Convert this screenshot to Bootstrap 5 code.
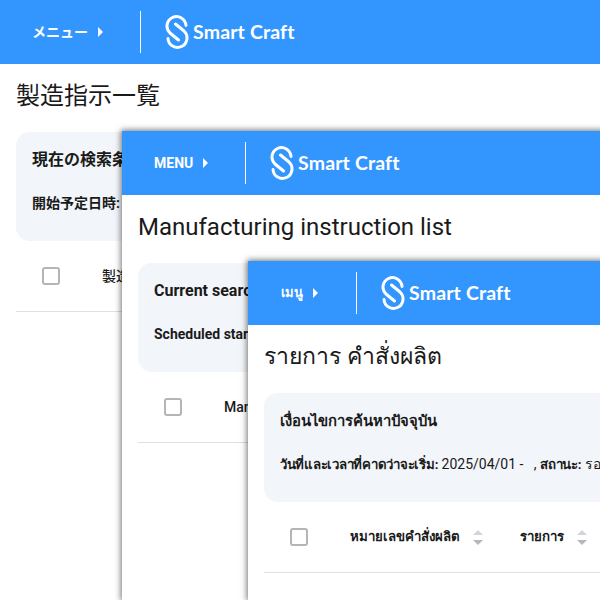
<!DOCTYPE html>
<html lang="ja">
<head>
<meta charset="utf-8">
<link href="https://cdn.jsdelivr.net/npm/bootstrap@5.3.0/dist/css/bootstrap.min.css" rel="stylesheet">
<style>
html,body{margin:0;height:100%;overflow:hidden;background:#fff}
.stage{position:relative;width:600px;height:600px;overflow:hidden;font-family:Roboto,"Noto Sans CJK JP","Noto Sans",sans-serif;color:#1a1a1a}
.win{position:absolute;right:-400px;bottom:0;background:#fff}
.win1{left:0;top:0}
.win2{left:122px;top:131px;box-shadow:0 0 6px 1px rgba(0,0,0,.55)}
.win3{left:248px;top:261px;box-shadow:0 0 6px 1px rgba(0,0,0,.55)}
.topbar{height:64px;background:#3396ff;color:#fff}
.menu-area{width:140px;padding-left:32px;font-size:14px;font-weight:700;height:100%}
.win2 .menu-area{width:123px}
.win3 .menu-area{width:108px;padding-left:33px;font-size:13px}
.menu-caret{width:0;height:0;border-left:5px solid #fff;border-top:5px solid transparent;border-bottom:5px solid transparent;margin-left:10px}
.bar-rule{width:1px;height:42px;background:#fff}
.logo-wrap{margin-left:24px;gap:4px}
.logo-text{font-family:Lato,"Open Sans",sans-serif;font-size:19.5px;font-weight:700;letter-spacing:.15px;white-space:nowrap;color:#fff}
.page-body{padding:0 16px}
.page-title{font-size:24px;font-weight:400;margin:0;height:64px;line-height:64px;white-space:nowrap}
.win3 .page-title{font-size:23px}
.search-box{background:#f2f5f9;border-radius:14px;height:109px;padding:16px;margin-top:4px;white-space:nowrap;overflow:hidden}
.search-head{font-size:16px;font-weight:700;line-height:24px;margin-bottom:19px}
.win3 .search-head{font-size:14.8px}
.search-line{font-size:14px;line-height:24px}
.search-line b{font-weight:700}
.win3 .search-line b{font-size:13.25px;letter-spacing:-.255px}
.list-head{height:71px;border-bottom:1px solid #dcdfe3;font-size:14px;font-weight:500;white-space:nowrap}
.win3 .list-head{font-size:13.25px;font-weight:700}
.tick{width:18px;height:18px;border:2px solid #b5b5b5;border-radius:3px;margin-left:26px;margin-right:42px;flex:none}
.sorter{display:inline-flex;flex-direction:column;gap:5px;margin-left:13px;margin-right:37px}
.sorter i{display:block;width:0;height:0;border-left:5px solid transparent;border-right:5px solid transparent}
.sorter i:first-child{border-bottom:5px solid #d2d5d9}
.sorter i:last-child{border-top:5px solid #b4b8bd}
</style>
</head>
<body>
<div class="stage">
  <section class="win win1">
    <header class="topbar d-flex align-items-center">
      <div class="menu-area d-flex align-items-center"><span>メニュー</span><span class="menu-caret"></span></div>
      <div class="bar-rule"></div>
      <div class="logo-wrap d-flex align-items-center">
        <svg width="24" height="34" viewBox="0 0 24 34" fill="none" stroke="#fff" stroke-width="3" stroke-linecap="round"><path d="M21 10.500A9.500 9.500 0 1 0 5 18L13.500 25"/><path d="M3 23.500A9.500 9.500 0 1 0 19 16L10.500 9"/></svg>
        <span class="logo-text">Smart Craft</span>
      </div>
    </header>
    <div class="page-body">
      <h1 class="page-title">製造指示一覧</h1>
      <div class="search-box">
        <div class="search-head">現在の検索条件</div>
        <div class="search-line"><b>開始予定日時:</b> 2025/04/01 -</div>
      </div>
      <div class="list-head d-flex align-items-center"><span class="tick"></span><span>製造指示番号</span></div>
    </div>
  </section>
  <section class="win win2">
    <header class="topbar d-flex align-items-center">
      <div class="menu-area d-flex align-items-center"><span>MENU</span><span class="menu-caret"></span></div>
      <div class="bar-rule"></div>
      <div class="logo-wrap d-flex align-items-center">
        <svg width="24" height="34" viewBox="0 0 24 34" fill="none" stroke="#fff" stroke-width="3" stroke-linecap="round"><path d="M21 10.500A9.500 9.500 0 1 0 5 18L13.500 25"/><path d="M3 23.500A9.500 9.500 0 1 0 19 16L10.500 9"/></svg>
        <span class="logo-text">Smart Craft</span>
      </div>
    </header>
    <div class="page-body">
      <h1 class="page-title">Manufacturing instruction list</h1>
      <div class="search-box">
        <div class="search-head">Current search conditions</div>
        <div class="search-line"><b>Scheduled start date:</b> 2025/04/01 -</div>
      </div>
      <div class="list-head d-flex align-items-center"><span class="tick"></span><span>Manufacturing instruction number</span></div>
    </div>
  </section>
  <section class="win win3">
    <header class="topbar d-flex align-items-center">
      <div class="menu-area d-flex align-items-center"><span>เมนู</span><span class="menu-caret"></span></div>
      <div class="bar-rule"></div>
      <div class="logo-wrap d-flex align-items-center">
        <svg width="24" height="34" viewBox="0 0 24 34" fill="none" stroke="#fff" stroke-width="3" stroke-linecap="round"><path d="M21 10.500A9.500 9.500 0 1 0 5 18L13.500 25"/><path d="M3 23.500A9.500 9.500 0 1 0 19 16L10.500 9"/></svg>
        <span class="logo-text">Smart Craft</span>
      </div>
    </header>
    <div class="page-body">
      <h1 class="page-title">รายการ คำสั่งผลิต</h1>
      <div class="search-box">
        <div class="search-head">เงื่อนไขการค้นหาปัจจุบัน</div>
        <div class="search-line"><b>วันที่และเวลาที่คาดว่าจะเริ่ม:</b> 2025/04/01 - &nbsp; , <b>สถานะ:</b> รอดำเนินการ</div>
      </div>
      <div class="list-head d-flex align-items-center"><span class="tick"></span><span>หมายเลขคำสั่งผลิต</span><span class="sorter"><i></i><i></i></span><span>รายการ</span><span class="sorter"><i></i><i></i></span></div>
    </div>
  </section>
</div>
<script src="https://cdn.jsdelivr.net/npm/bootstrap@5.3.0/dist/js/bootstrap.bundle.min.js"></script>
</body>
</html>
